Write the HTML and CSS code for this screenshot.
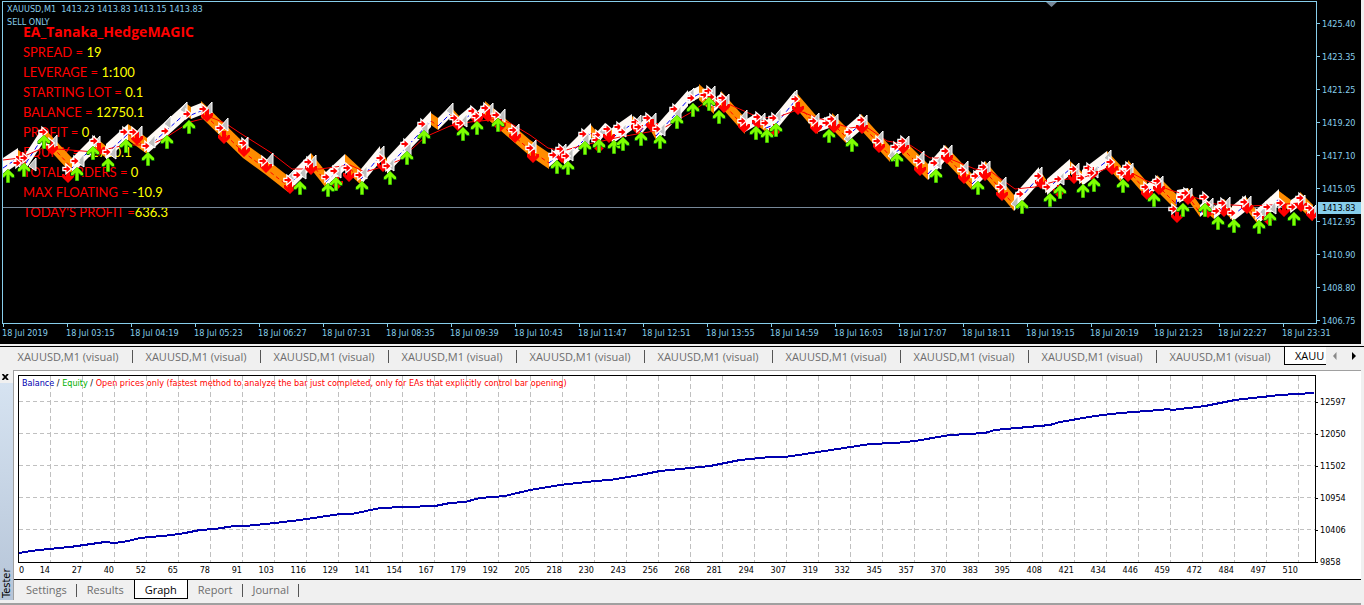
FILE: index.html
```html
<!DOCTYPE html>
<html lang="en">
<head>
<meta charset="utf-8">
<title>XAUUSD,M1 (visual)</title>
<link rel="stylesheet" href="styles.css">
</head>
<body>
<main class="app">
  <section class="chart">
    <div class="chart-plot">
      <div class="chart-head">
        <div>XAUUSD,M1&nbsp; 1413.23 1413.83 1413.15 1413.83</div>
        <div>SELL ONLY</div>
      </div>
      <div class="ea">
        <h1 class="ea-title">EA_Tanaka_HedgeMAGIC</h1>
        <div class="ea-row">SPREAD = <b>19</b></div>
        <div class="ea-row">LEVERAGE = <b>1:100</b></div>
        <div class="ea-row">STARTING LOT = <b>0.1</b></div>
        <div class="ea-row">BALANCE = <b>12750.1</b></div>
        <div class="ea-row">PROFIT = <b>0</b></div>
        <div class="ea-row">EQUITY = <b>12750.1</b></div>
        <div class="ea-row">TOTAL ORDERS = <b>0</b></div>
        <div class="ea-row">MAX FLOATING = <b>-10.9</b></div>
        <div class="ea-row">TODAY'S PROFIT =<b>636.3</b></div>
      </div>
      <svg class="plot-svg" id="price" viewBox="3 2 1313 321" preserveAspectRatio="none" aria-hidden="true">
        <defs>
          <g id="up"><path d="M0 0 6.500 6v3L4 9 2 7V14h-4V7L-4 9l-2.500 0V6Z" fill="#0a7a00"/><path d="M0 0 6 6v2H4L1.500 5.500v8h-3v-8L-4 8h-2V6Z" fill="#7fff00"/></g>
          <g id="down"><path d="M0 0-6-6v-3h2l2 2.500V-13h4v6.500L4-9h2v3Z" fill="#f00"/></g>
          <g id="left"><path d="M-4 1 3-7V6Z" fill="#c0c0c0" stroke="#fff"/></g>
          <g id="right"><path d="M-3.500-1H-.5V-3.500L3.500 0-.5 3.500V1H-3.500Z" fill="#f00" stroke="#fff" stroke-width="2.500" paint-order="stroke"/></g>
        </defs>
        <path d="M3 207.500H1316" stroke="#778899"/>
        <path d="M1046 2h11l-5.500 5Z" fill="#778899"/>
      </svg>
    </div>
    <div class="price-axis">
      <span>1425.40</span><span>1423.35</span><span>1421.25</span><span>1419.20</span><span>1417.10</span><span>1415.05</span><span>1412.95</span><span>1410.90</span><span>1408.80</span><span>1406.75</span>
      <strong class="price-now">1413.83</strong>
    </div>
    <div class="time-axis">
      <span>18 Jul 2019</span><span>18 Jul 03:15</span><span>18 Jul 04:19</span><span>18 Jul 05:23</span><span>18 Jul 06:27</span><span>18 Jul 07:31</span><span>18 Jul 08:35</span><span>18 Jul 09:39</span><span>18 Jul 10:43</span><span>18 Jul 11:47</span><span>18 Jul 12:51</span><span>18 Jul 13:55</span><span>18 Jul 14:59</span><span>18 Jul 16:03</span><span>18 Jul 17:07</span><span>18 Jul 18:11</span><span>18 Jul 19:15</span><span>18 Jul 20:19</span><span>18 Jul 21:23</span><span>18 Jul 22:27</span><span>18 Jul 23:31</span>
    </div>
  </section>

  <nav class="windows">
    <button class="win">XAUUSD,M1 (visual)</button><button class="win">XAUUSD,M1 (visual)</button><button class="win">XAUUSD,M1 (visual)</button><button class="win">XAUUSD,M1 (visual)</button><button class="win">XAUUSD,M1 (visual)</button><button class="win">XAUUSD,M1 (visual)</button><button class="win">XAUUSD,M1 (visual)</button><button class="win">XAUUSD,M1 (visual)</button><button class="win">XAUUSD,M1 (visual)</button><button class="win">XAUUSD,M1 (visual)</button><button class="win win-active">XAUU</button>
    <button class="scroll" aria-label="Scroll left"><svg width="5" height="8" viewBox="0 0 5 8"><path d="M3.500 0v8L0 4Z" fill="#888"/></svg></button>
    <button class="scroll" aria-label="Scroll right"><svg width="5" height="8" viewBox="0 0 5 8"><path d="M0 0v8l4-4Z" fill="#000"/></svg></button>
  </nav>

  <section class="tester">
    <aside class="side">
      <button class="close" aria-label="Close"><svg width="7" height="6" viewBox="0 0 7 6"><path d="M.5 0 6 6M6 0 .5 6" stroke="#000" stroke-width="1.800"/></svg></button>
      <div class="side-title">Tester</div>
    </aside>
    <div class="panel">
      <div class="graph">
        <div class="graph-plot">
          <div class="legend"><span class="c-balance">Balance</span> / <span class="c-equity">Equity</span> / <span class="c-model">Open prices only (fastest method to analyze the bar just completed, only for EAs that explicitly control bar opening)</span></div>
          <svg class="plot-svg" id="balance" viewBox="19 376 1296 186" preserveAspectRatio="none" aria-hidden="true"></svg>
        </div>
        <div class="value-axis"><span>12597</span><span>12050</span><span>11502</span><span>10954</span><span>10406</span><span>9858</span></div>
        <div class="trade-axis">
          <span><i>0</i>14</span><span>27</span><span>40</span><span>52</span><span>65</span><span>78</span><span>91</span><span>103</span><span>116</span><span>129</span><span>141</span><span>154</span><span>167</span><span>179</span><span>192</span><span>205</span><span>218</span><span>230</span><span>243</span><span>256</span><span>268</span><span>281</span><span>294</span><span>307</span><span>319</span><span>332</span><span>345</span><span>357</span><span>370</span><span>383</span><span>395</span><span>408</span><span>421</span><span>434</span><span>446</span><span>459</span><span>472</span><span>484</span><span>497</span><span>510</span>
        </div>
      </div>
      <nav class="tabs">
        <button class="tab">Settings</button><button class="tab tab-before">Results</button><button class="tab tab-active">Graph</button><button class="tab">Report</button><button class="tab">Journal</button>
      </nav>
    </div>
  </section>
</main>
<script src="chart.js"></script>
</body>
</html>
```
FILE: styles.css
```css
* { box-sizing: border-box; }

body {
  margin: 0;
  background: #f0f0f0;
  font-family: "DejaVu Sans Condensed", "DejaVu Sans", sans-serif;
  font-size: 9px;
}

button {
  margin: 0;
  padding: 0;
  border: 0;
  background: none;
  font-family: "Open Sans", sans-serif;
  font-size: 11px;
  color: #6d6d6d;
  white-space: nowrap;
}

.app {
  display: flex;
  flex-direction: column;
  min-height: 100vh;
}

.plot-svg {
  position: absolute;
  inset: 0;
  width: 100%;
  height: 100%;
}

/* Price chart */
.chart {
  flex: 1 1 auto;
  display: grid;
  grid-template-columns: 1fr 44px;
  grid-template-rows: minmax(323px, 1fr) 20px;
  margin-right: 3px;
  padding: 1px 0 0 2px;
  background: #000;
  color: #87ceeb;
}

.chart-plot {
  position: relative;
  border: 1px solid #87ceeb;
}

.chart-head {
  position: absolute;
  top: 1px;
  left: 4px;
  line-height: 13px;
  white-space: nowrap;
}

.ea {
  position: absolute;
  top: 20px;
  left: 20px;
  font-family: Lato, sans-serif;
  font-size: 13px;
  line-height: 20px;
  color: #f00;
  white-space: nowrap;
}

.ea-title {
  margin: 0;
  font-family: "Open Sans", sans-serif;
  font-size: 14px;
  font-weight: 700;
  line-height: 20px;
}

.ea-row b {
  font-weight: 400;
  color: #ff0;
}

.price-axis {
  position: relative;
  grid-row: 1 / 3;
  grid-column: 2;
  display: flex;
  flex-direction: column;
  padding: 6px 0 7px;
}

.price-axis span {
  flex: 1;
  display: flex;
  align-items: center;
}

.price-axis span::before {
  content: "";
  width: 3px;
  height: 1px;
  margin-right: 2px;
  background: #87ceeb;
}

.price-now {
  position: absolute;
  top: 201px;
  left: 1px;
  right: 0;
  padding-left: 4px;
  background: #87ceeb;
  color: #000;
  font-weight: 400;
  line-height: 12px;
}

.time-axis {
  grid-row: 2;
  grid-column: 1;
  display: grid;
  grid-template-columns: repeat(20, minmax(0, 1fr)) 50px;
  margin-right: -15px;
  line-height: 12px;
  white-space: nowrap;
}

.time-axis span::before {
  content: "";
  display: block;
  width: 1px;
  height: 3px;
  margin-left: 1px;
  background: #87ceeb;
}

/* Chart window tabs */
.windows {
  display: flex;
  align-items: flex-start;
  height: 21px;
  margin-top: 2px;
  padding-left: 4px;
  border-top: 1px solid #000;
}

.win {
  position: relative;
  flex: 0 0 128px;
  height: 18px;
}

.win::after {
  content: "";
  position: absolute;
  top: 3px;
  right: -1px;
  width: 1px;
  height: 13px;
  background: #555;
}

.win-active {
  flex: 1 1 0;
  padding-left: 10px;
  border: solid #000;
  border-width: 0 0 1px 1px;
  background: #fff;
  color: #000;
  text-align: left;
  overflow: hidden;
}

.win-active::after { display: none; }

.scroll {
  flex: 0 0 19px;
  display: flex;
  align-items: center;
  justify-content: center;
  height: 17px;
}

/* Strategy tester */
.tester {
  display: grid;
  grid-template-columns: 13px 1fr;
  margin: 3px 3px 0 0;
  border-bottom: 2px solid #a0a0a0;
}

.side {
  display: flex;
  flex-direction: column;
  padding-bottom: 3px;
}

.close {
  display: flex;
  align-items: center;
  height: 13px;
  padding-left: 2px;
}

.side-title {
  flex: 1;
  writing-mode: vertical-rl;
  transform: rotate(180deg);
  padding-top: 2px;
  background: linear-gradient(0deg, #d6e3f1, #b6c5d8);
  color: #000;
  font-size: 11px;
  line-height: 13px;
}

.panel {
  border: solid #a0a0a0;
  border-width: 1px 0 0 1px;
  margin-bottom: 3px;
}

.graph {
  display: grid;
  grid-template-columns: 1fr 45px;
  grid-template-rows: 188px 16px;
  padding: 4px 0 0 4px;
  background: #fff;
  color: #000;
}

.graph-plot {
  position: relative;
  border: 1px solid #000;
}

.legend {
  position: absolute;
  z-index: 1;
  top: 1px;
  left: 3px;
  line-height: 13px;
  white-space: nowrap;
}

.c-balance { color: #0000b0; }
.c-equity { color: #00b000; }
.c-model { color: #f00; }

.value-axis {
  grid-row: 1 / 3;
  grid-column: 2;
  display: flex;
  flex-direction: column;
  padding-top: 11px;
}

.value-axis span {
  display: flex;
  align-items: center;
  height: 32px;
}

.value-axis span::before {
  content: "";
  width: 2px;
  height: 1px;
  margin-right: 2px;
  background: #000;
}

.trade-axis {
  display: grid;
  grid-template-columns: repeat(40, minmax(0, 1fr));
  margin-right: 18px;
  line-height: 14px;
}

.trade-axis span {
  display: flex;
  justify-content: flex-end;
}

.trade-axis i {
  margin-right: auto;
  padding-left: 1px;
  font-style: normal;
}

.tabs {
  display: flex;
  height: 21px;
  padding-left: 2px;
  border-top: 1px solid #000;
}

.tab {
  position: relative;
  height: 19px;
  padding: 0 10px;
}

.tab::after {
  content: "";
  position: absolute;
  top: 4px;
  right: 0;
  width: 1px;
  height: 13px;
  background: #555;
}

.tab-active {
  border: 1px solid #000;
  border-top: 0;
  background: #fff;
  color: #000;
}

.tab-active::after,
.tab-before::after { display: none; }
```
FILE: chart.js
```javascript
const NS = "http://www.w3.org/2000/svg";

function add(svg, name, attrs) {
  const el = document.createElementNS(NS, name);
  for (const key in attrs) el.setAttribute(key, attrs[key]);
  svg.appendChild(el);
}

function pairs(text) {
  return text.trim().split(/\s+/).map(p => p.split(",").map(Number));
}

const price = document.getElementById("price");

// Turning points of the candle band
const band = pairs(`3,166 18,156 26,161 43,135 72,166 95,143 106,152 128,132 147,146 187,110 191,113
  201,109 243,150 265,166 288,184 311,161 326,180 345,162 361,177 380,154 387,166 431,119 438,124 450,112
  459,122 471,112 477,118 485,109 530,148 549,161 560,152 564,158 591,131 597,138 605,129 612,136 632,122
  640,130 648,120 656,134 688,98 699,92 714,106 721,99 745,126 757,119 766,126 776,122 795,99 818,126
  832,121 846,135 861,122 890,154 902,146 928,172 945,153 972,182 985,169 1014,203 1039,175 1047,187
  1070,167 1082,178 1107,159 1121,174 1128,168 1147,190 1157,183 1176,202 1177,196 1188,194 1200,211
  1206,206 1214,213 1224,205 1232,214 1246,203 1257,217 1279,197 1291,206 1300,200 1313,213`);

for (let i = 1; i < band.length; i++) {
  const [x1, y1] = band[i - 1], [x2, y2] = band[i];
  const rise = y2 < y1;
  const steep = Math.abs(y2 - y1) / (x2 - x1 + 1);
  const h = steep > 0.6 && x2 - x1 > 12 ? 8 : 6;
  add(price, "polygon", {
    points: `${x1},${y1 - h} ${x2},${y2 - h} ${x2},${y2 + h} ${x1},${y1 + h}`,
    fill: rise ? "#fffaf5" : "#ff8c00"
  });
  add(price, "path", {
    d: `M${x1} ${y1 + 2}L${x2} ${y2 + 2}`,
    stroke: rise ? "#00f" : "#f00",
    "stroke-dasharray": rise ? "5 3" : "4 3"
  });
}

add(price, "polyline", {
  points: `3,160 20,158 43,148 70,150 95,152 125,145 150,145 165,138 190,122 210,117 225,123 240,133 270,152
    292,169 320,169 350,165 365,172 385,166 400,160 425,137 450,126 470,122 500,119 510,123 530,135 548,148
    563,151 580,146 620,137 660,130 690,113 713,97 735,107 760,118 778,117 797,110 815,117 850,128 865,126
    887,141 910,145 930,158 948,158 975,169 990,171 1015,189 1035,187 1060,180 1085,177 1108,168 1130,172
    1145,180 1170,190 1200,199 1215,204 1250,206 1270,205 1300,203`,
  fill: "none", stroke: "#f00"
});

const marks = {
  left: `20,163 33,165 54,142 81,161 97,143 113,153 139,133 152,142 168,123 184,109 209,109 225,125
    245,144 270,160 291,177 303,173 313,162 338,172 364,173 381,153 391,165 408,149 425,128 450,110 464,121
    490,110 502,116 516,131 533,147 563,151 570,155 586,139 603,131 623,131 638,122 653,120 662,130 678,113
    691,95 712,93 726,101 744,117 762,120 778,116 794,97 816,120 835,121 848,138 864,122 880,138 892,155
    906,143 921,158 938,163 949,152 965,168 987,168 1003,184 1015,203 1039,174 1061,179 1076,170 1095,172
    1108,157 1130,170 1160,183 1189,195 1210,205 1227,204 1248,203 1263,212 1273,208 1302,202 1313,212`,
  down: `22,165 52,155 68,183 99,156 137,145 207,122 224,144 244,157 266,173 290,194 311,175 337,190 349,182
    383,172 458,131 477,125 488,122 500,132 515,143 533,163 562,163 599,153 609,143 637,134 652,132 711,108
    724,113 744,133 758,129 775,137 798,115 816,134 834,133 862,134 879,153 903,154 920,176 947,164 964,184
    985,181 1002,201 1041,189 1059,198 1074,184 1092,180 1112,175 1128,182 1147,200 1159,195 1177,223
    1188,205 1208,218 1224,217 1247,214 1268,225 1284,217 1301,212 1312,221`,
  up: `8,169 24,163 44,135 77,167 93,146 108,158 126,139 148,152 167,135 189,120 300,181 328,183 336,177
    362,181 390,171 407,151 424,130 463,127 477,121 498,118 557,160 568,161 585,141 599,139 614,140 623,137
    641,132 660,135 677,115 693,103 709,97 719,110 756,126 767,129 776,123 829,129 852,138 897,153 936,169
    978,181 1022,200 1050,193 1060,185 1083,184 1094,178 1123,179 1154,193 1183,203 1205,203 1218,216
    1234,219 1259,220 1270,212 1294,212`,
  right: `17,163 24,158 43,132 50,143 67,169 75,161 94,141 107,152 124,132 133,132 146,146 165,131 187,114
    203,109 220,128 243,143 263,161 288,180 297,175 308,162 326,177 334,171 347,168 359,175 380,158 387,166
    405,144 422,124 454,118 460,123 472,111 476,116 485,108 496,115 513,130 530,148 553,155 560,149 566,156
    583,134 597,135 596,140 607,129 618,127 622,132 635,122 638,127 647,118 657,129 674,109 691,98 704,95
    708,91 711,97 716,104 722,98 742,121 757,117 765,123 773,118 795,99 813,121 826,123 831,119 849,132
    861,120 877,141 895,147 902,141 918,161 934,163 945,151 962,170 975,176 983,167 1000,187 1020,194
    1038,176 1047,187 1058,179 1073,169 1081,178 1088,168 1091,173 1110,162 1121,173 1127,167 1145,187
    1157,181 1173,209 1181,197 1185,193 1204,197 1207,205 1216,211 1222,203 1232,213 1244,202 1257,214
    1267,207 1280,203 1292,207 1300,198 1309,208`
};

for (const kind of ["left", "down", "right", "up"]) {
  for (const [x, y] of pairs(marks[kind])) add(price, "use", { href: "#" + kind, x, y });
}

// Balance graph
const balance = document.getElementById("balance");

for (let x = 50.5; x < 1300; x += 32) {
  add(balance, "path", { d: `M${x} 376V562`, stroke: "#c0c0c0", "stroke-dasharray": "5 3" });
}
for (let y = 401.5; y < 540; y += 32) {
  add(balance, "path", { d: `M19 ${y}H1315`, stroke: "#c0c0c0", "stroke-dasharray": "4 3" });
}

const line = `19,553 25,552 38,550 50,549 58,548 70,547 84,545 105,542 115,543 128,541 140,538 172,535 185,533
  200,530 215,529 234,526 245,526 275,523 300,520 320,517 340,514 352,514 380,508 405,507 435,506 450,503
  465,502 480,498 505,496 530,490 560,485 595,481 610,480 640,475 660,471 690,468 710,466 740,460 770,457
  785,457 805,454 870,444 895,443 915,441 950,435 985,433 995,430 1050,425 1060,422 1095,416 1120,413
  1160,410 1168,409 1172,410 1205,406 1235,400 1280,395 1314,393`;
add(balance, "polyline", {
  points: line, fill: "none", stroke: "#0000b0", "stroke-width": 2, "shape-rendering": "crispEdges"
});
```
